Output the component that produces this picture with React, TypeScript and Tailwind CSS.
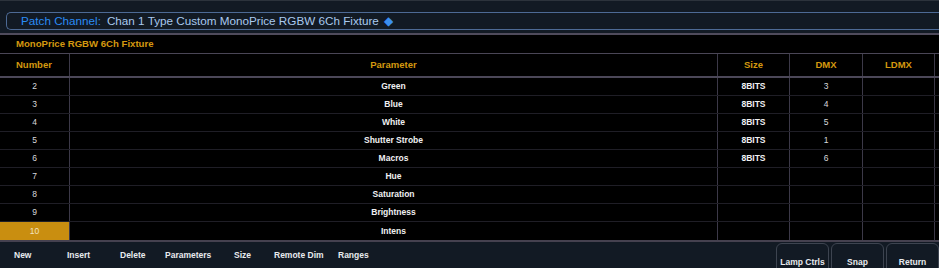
import React from "react";

const rows = [
  { n: "2", p: "Green", s: "8BITS", d: "3" },
  { n: "3", p: "Blue", s: "8BITS", d: "4" },
  { n: "4", p: "White", s: "8BITS", d: "5" },
  { n: "5", p: "Shutter Strobe", s: "8BITS", d: "1" },
  { n: "6", p: "Macros", s: "8BITS", d: "6" },
  { n: "7", p: "Hue", s: "", d: "" },
  { n: "8", p: "Saturation", s: "", d: "" },
  { n: "9", p: "Brightness", s: "", d: "" },
  { n: "10", p: "Intens", s: "", d: "", sel: true },
];

const softkeys = [
  { label: "New", w: "w-[53px]" },
  { label: "Insert", w: "w-[53px]" },
  { label: "Delete", w: "w-[45px]" },
  { label: "Parameters", w: "w-[69px]" },
  { label: "Size", w: "w-[40px]" },
  { label: "Remote Dim", w: "w-[64px]" },
  { label: "Ranges", w: "w-[50px]" },
];

const grid = "grid grid-cols-[70px_648px_72px_73px_72px_1fr]";

export default function App(): React.ReactElement {
  return (
    <main className="w-[939px] h-[268px] bg-black overflow-hidden flex flex-col font-['Liberation_Sans',Arial,sans-serif]">
      {/* --- COMMAND LINE --- */}
      <section className="h-[35px] shrink-0 bg-[#121a24] border-t border-[#2c333c] border-b-2 border-b-[#4f4b5c] pt-[11px] pl-[6px]">
        <div className="h-[18px] border border-r-0 border-[#4d6a95] rounded-l-[5px] flex items-center pl-[14px] text-[11.7px] leading-none">
          <span className="text-[#2a8cf5]">Patch Channel:</span>
          <span className="text-[#a9c9ee] ml-[6px]">Chan 1 Type Custom MonoPrice RGBW 6Ch Fixture</span>
          <span className="text-[#3b8ff0] ml-[5px] text-[12px]">◆</span>
        </div>
      </section>

      {/* --- FIXTURE TITLE --- */}
      <div className="h-[19px] shrink-0 flex items-center pl-[16px] border-b border-[#4a4656] text-[9.6px] font-bold text-[#d4980f]">
        MonoPrice RGBW 6Ch Fixture
      </div>

      {/* --- HEADER --- */}
      <div className={`${grid} h-[24px] shrink-0 border-b-2 border-[#4b4758] text-[9.5px] font-bold text-[#d4980f]`}>
        <div className="flex items-center pl-[16px] border-r border-[#3c3948]">Number</div>
        <div className="flex items-center justify-center border-r border-[#3c3948]">Parameter</div>
        <div className="flex items-center justify-center border-r border-[#3c3948]">Size</div>
        <div className="flex items-center justify-center border-r border-[#3c3948]">DMX</div>
        <div className="flex items-center justify-center border-r border-[#3c3948]">LDMX</div>
        <div />
      </div>

      {/* --- ROWS --- */}
      <div className="flex flex-col shrink-0">
        {rows.map((r, i) => (
          <div
            key={r.n}
            className={`${grid} h-[18px] text-[8.5px] leading-none ${
              i < rows.length - 1 ? "border-b border-[#1f1e26]" : ""
            }`}
          >
            <div
              className={`flex items-center justify-center border-r border-[#3c3948] ${
                r.sel ? "bg-[#c98e10] text-[#f3e3c0]" : "text-[#d8d8dc]"
              }`}
            >
              {r.n}
            </div>
            <div className="flex items-center justify-center border-r border-[#3c3948] font-bold text-[#f0f0f2]">{r.p}</div>
            <div className="flex items-center justify-center border-r border-[#3c3948] font-bold text-[#f0f0f2]">{r.s}</div>
            <div className="flex items-center justify-center border-r border-[#3c3948] text-[#d8d8dc]">{r.d}</div>
            <div className="border-r border-[#3c3948]" />
            <div />
          </div>
        ))}
      </div>

      {/* --- SOFTKEYS --- */}
      <footer className="flex-1 bg-[#121a24] border-t-2 border-[#45414f] flex items-start">
        <div className="flex pl-[14px] pt-[7px] text-[8.5px] font-bold text-[#e8eaee]">
          {softkeys.map((k) => (
            <span key={k.label} className={k.w}>
              {k.label}
            </span>
          ))}
        </div>
        <div className="ml-auto flex gap-[2px] pt-[1px] h-full">
          {["Lamp Ctrls", "Snap", "Return"].map((b) => (
            <div
              key={b}
              className="w-[53px] h-[30px] border border-[#3d4450] rounded-t-[6px] flex justify-center pt-[12px] text-[8.5px] font-bold text-[#e8eaee]"
            >
              {b}
            </div>
          ))}
        </div>
      </footer>
    </main>
  );
}
